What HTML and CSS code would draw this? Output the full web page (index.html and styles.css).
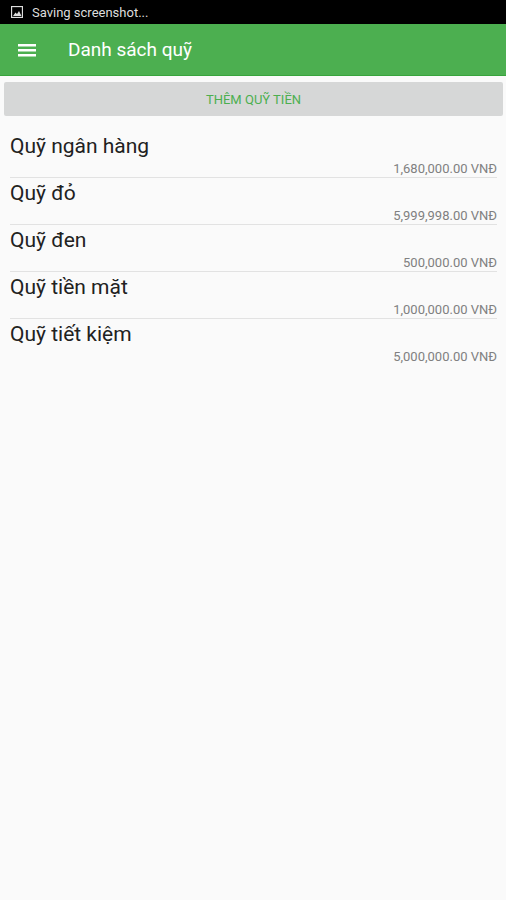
FILE: index.html
```
<!DOCTYPE html>
<html lang="vi">
<head>

	<!-- Page title -->
	<title>Danh sách quỹ</title>

	<!-- Meta tags -->
	<meta charset="UTF-8">
	<meta name="viewport" content="width=device-width, initial-scale=1.0">

	<!-- Style -->
	<link rel="stylesheet" href="styles.css">

</head>
<body>

<!-- Status bar -->
<div class="status">
	<svg width="12" height="12" viewBox="0 0 12 12" fill="none">
		<rect x="0.500" y="0.500" width="11" height="11" stroke="#ddd" stroke-width="1.300"/>
		<path d="M2 10 4.500 6.500 6 8 8 5 10.500 10z" fill="#ddd"/>
	</svg>
	<span>Saving screenshot...</span>
</div>

<!-- Toolbar -->
<header>
	<button class="menu" aria-label="Menu">
		<svg width="18" height="14" viewBox="0 0 18 14" fill="#fff">
			<path d="M0 1h18v2.500H0zM0 6h18v2.500H0zM0 11h18v2.500H0z"/>
		</svg>
	</button>
	<h1>Danh sách quỹ</h1>
</header>

<main>
	<button class="add">THÊM QUỸ TIỀN</button>

	<!-- Funds -->
	<ul class="funds">
		<li>
			<span class="name">Quỹ ngân hàng</span>
			<span class="amount">1,680,000.00 VNĐ</span>
		</li>
		<li>
			<span class="name">Quỹ đỏ</span>
			<span class="amount">5,999,998.00 VNĐ</span>
		</li>
		<li>
			<span class="name">Quỹ đen</span>
			<span class="amount">500,000.00 VNĐ</span>
		</li>
		<li>
			<span class="name">Quỹ tiền mặt</span>
			<span class="amount">1,000,000.00 VNĐ</span>
		</li>
		<li>
			<span class="name">Quỹ tiết kiệm</span>
			<span class="amount">5,000,000.00 VNĐ</span>
		</li>
	</ul>
</main>

</body>
</html>
```
FILE: styles.css
```
* {
	box-sizing: border-box;
}

body {
	margin: 0;
	background: #fafafa;
	color: #212121;
	font-family: Roboto, sans-serif;
}

button {
	border: none;
	font-family: inherit;
	cursor: pointer;
}

.status {
	display: flex;
	align-items: center;
	gap: 9px;
	height: 24px;
	padding: 0 11px;
	background: #000;
	color: #ddd;
	font-size: 13px;
}

header {
	display: flex;
	align-items: center;
	gap: 24px;
	height: 52px;
	padding: 0 10px;
	background: #4caf50;
	border-bottom: 1px solid #37a43c;
}

.menu {
	display: flex;
	padding: 8px;
	background: transparent;
}

h1 {
	margin: 0;
	color: #fff;
	font-size: 19px;
	font-weight: 400;
}

main {
	padding: 6px 3px 6px 4px;
}

.add {
	display: block;
	width: 100%;
	height: 34px;
	border-radius: 2px;
	background: #d6d7d7;
	color: #4caf50;
	font-size: 13px;
}

.funds {
	margin: 15px 0 0;
	padding: 0 6px;
	list-style: none;
}

.funds li {
	display: flex;
	flex-direction: column;
	height: 47px;
	border-bottom: 1px solid #e2e2e2;
}

.funds li:last-child {
	border-bottom: none;
}

.name {
	font-size: 21px;
	line-height: 30px;
}

.amount {
	align-self: flex-end;
	color: #808080;
	font-size: 13px;
	line-height: 16px;
}
```
